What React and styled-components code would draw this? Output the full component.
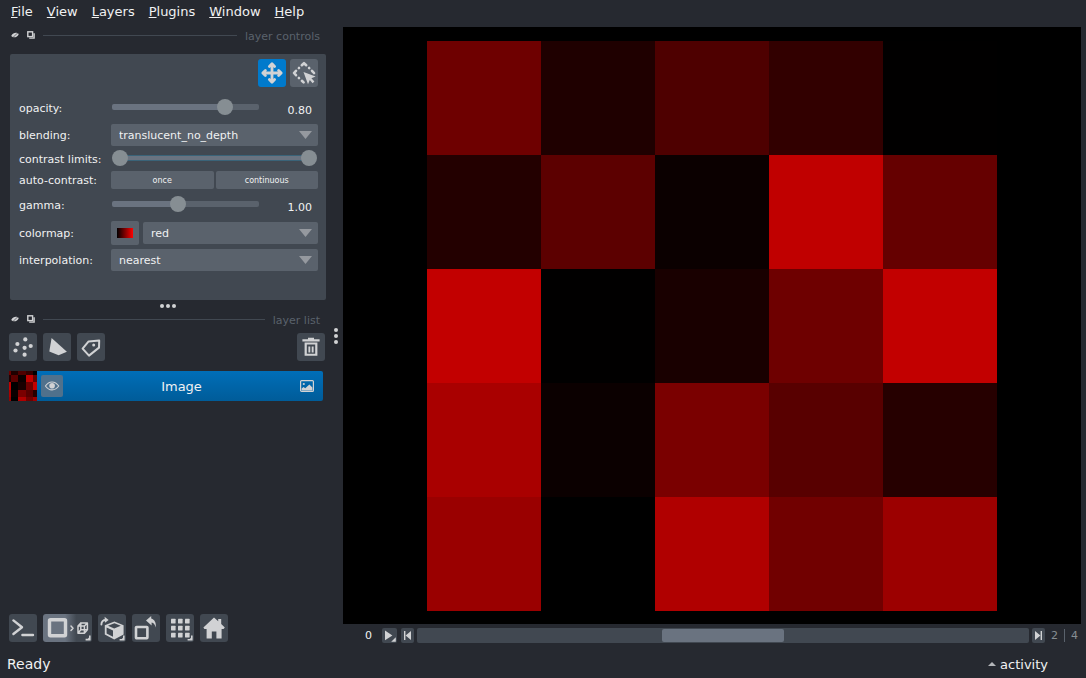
import { useState } from 'react';
import styled, { createGlobalStyle } from 'styled-components';

const GlobalStyle = createGlobalStyle`
  * {
    box-sizing: border-box;
  }

  body {
    margin: 0;
    background: #262930;
    color: #f0f1f2;
    font-family: 'DejaVu Sans', sans-serif;
    font-size: 11px;
  }

  button, input, select {
    font-family: inherit;
    color: inherit;
    margin: 0;
  }
`;

const Window = styled.div`
  display: flex;
  flex-direction: column;
  height: 100vh;
`;

const MenuBar = styled.nav`
  display: flex;
  align-items: center;
  gap: 14px;
  height: 24px;
  padding: 0 11px;
`;

const MenuItem = styled.button`
  border: none;
  background: none;
  padding: 0;
  font-size: 13px;
  line-height: 20px;

  &::first-letter {
    text-decoration: underline;
  }
`;

const Main = styled.div`
  display: flex;
  flex: 1;
  min-height: 0;
`;

const Sidebar = styled.aside`
  display: flex;
  flex-direction: column;
  flex: none;
  width: 326px;
  padding: 0 0 8px 9px;
`;

const DockTitle = styled.div`
  display: flex;
  align-items: center;
  gap: 8px;
  height: 23px;
  padding: 0 6px 0 2px;
  margin-bottom: ${props => props.$space};
`;

const DockButton = styled.button`
  display: flex;
  border: none;
  background: none;
  padding: 0 0 1px;
`;

const DockLine = styled.div`
  flex: 1;
  height: 1px;
  background: #414851;
`;

const DockName = styled.h2`
  margin: 0;
  padding-top: 2px;
  font-size: 11px;
  font-weight: 400;
  line-height: 13px;
  color: #5a626c;
`;

const Controls = styled.section`
  display: flex;
  flex-direction: column;
  gap: 3px;
  margin-left: 1px;
  padding: 5px 8px 28px 9px;
  border-radius: 2px;
  background: #414851;
`;

const ModeButtons = styled.div`
  display: flex;
  justify-content: flex-end;
  gap: 4px;
  margin-bottom: 5px;
`;

const ControlRow = styled.div`
  display: grid;
  grid-template-columns: 92px minmax(0, 1fr);
  align-items: center;
  height: ${props => props.$height || '24px'};
`;

const ControlLabel = styled.label`
  padding-top: 2px;
  line-height: 14px;
  white-space: nowrap;
`;

const ControlBody = styled.div`
  display: flex;
  align-items: center;
  gap: ${props => props.$gap || '0'};
`;

const IconButton = styled.button`
  display: flex;
  flex: none;
  width: ${props => (props.$wide ? '49px' : '28px')};
  height: 28px;
  border: none;
  border-radius: 3px;
  padding: 0;
  background: ${props => {
    if (props.$tone === 'active') return '#007acc';
    if (props.$tone === 'mode') return '#5a626c';
    if (props.$wide) return 'linear-gradient(to right, #6a7380 45%, #414851 68%)';
    return '#414851';
  }};
`;

const Slider = styled.input`
  appearance: none;
  flex: 1;
  min-width: 0;
  height: 16px;
  margin: 0 0 2px 1px;
  background: transparent;

  &::-webkit-slider-runnable-track {
    height: 6px;
    border-radius: 2px;
    background: linear-gradient(to right, #6a7380 ${props => props.$fill}%, #5a626c ${props => props.$fill}%);
  }

  &::-webkit-slider-thumb {
    appearance: none;
    width: 16px;
    height: 16px;
    margin-top: -5px;
    border-radius: 50%;
    background: #868e93;
  }
`;

const SliderValue = styled.output`
  width: 59px;
  padding: 6px 6px 0 0;
  text-align: right;
  line-height: 14px;
`;

const RangePair = styled.div`
  position: relative;
  flex: 1;
  height: 16px;
  margin: 0 1px 2px;

  &::before {
    content: '';
    position: absolute;
    inset: 5px 8px;
    border: 1px solid #3a6378;
    border-width: 1px 0;
    background: #6a7380;
  }
`;

const RangeHandle = styled.input`
  appearance: none;
  position: absolute;
  inset: 0;
  width: 100%;
  height: 16px;
  background: transparent;
  pointer-events: none;

  &::-webkit-slider-thumb {
    appearance: none;
    pointer-events: auto;
    width: 16px;
    height: 16px;
    border-radius: 50%;
    background: #868e93;
  }
`;

const SelectBox = styled.div`
  position: relative;
  flex: 1;

  svg {
    position: absolute;
    right: 6px;
    top: 7px;
    pointer-events: none;
  }
`;

const Select = styled.select`
  appearance: none;
  display: block;
  width: 100%;
  height: 22px;
  border: none;
  border-radius: 2px;
  padding: 0 24px 0 8px;
  background: #5a626c;
  font-size: 11px;
`;

const SmallButton = styled.button`
  flex: 1;
  height: 18px;
  border: none;
  border-radius: 2px;
  padding: 0;
  background: #5a626c;
  font-size: 8px;
`;

const Swatch = styled.div`
  width: 28px;
  height: 24px;
  padding: 7px 6px;
  border-radius: 2px;
  background: #5a626c;

  &::before {
    content: '';
    display: block;
    height: 10px;
    background: linear-gradient(to right, #000, #f00);
  }
`;

const Splitter = styled.div`
  display: flex;
  flex-direction: ${props => (props.$vertical ? 'column' : 'row')};
  align-items: ${props => (props.$vertical ? 'center' : 'flex-end')};
  justify-content: center;
  gap: 2px;
  ${props => (props.$vertical ? 'width: 17px; padding: 0 0 2px 2px;' : 'height: 8px;')}

  i {
    width: 4px;
    height: 4px;
    border-radius: 50%;
    background: #d1d2d4;
  }
`;

const ButtonRow = styled.div`
  display: flex;
  gap: 6px;
  margin-right: 1px;
`;

const Spacer = styled.div`
  flex: 1;
`;

const LayerRow = styled.div`
  display: flex;
  align-items: center;
  height: 30px;
  margin: 10px 3px auto 0;
  border-radius: 2px;
  background: linear-gradient(to bottom, #006eb8, #005c99);
`;

const PixelGrid = styled.div`
  display: grid;
  grid-template-columns: repeat(5, 1fr);
  grid-template-rows: repeat(5, 1fr);
  height: calc(100% - 27px);
  aspect-ratio: 1;
`;

const Pixel = styled.div`
  background: ${props => props.$color};
`;

const EyeButton = styled.button`
  display: flex;
  width: 22px;
  height: 22px;
  margin-left: 4px;
  border: none;
  border-radius: 2px;
  padding: 0;
  background: #50718c;
`;

const LayerName = styled.span`
  flex: 1;
  font-size: 13px;
  text-align: center;
`;

const LayerKind = styled.span`
  display: flex;
  margin-right: 9px;
`;

const Viewer = styled.main`
  display: flex;
  flex-direction: column;
  flex: 1;
  min-width: 0;
  padding: 3px 5px 7px 0;
`;

const Canvas = styled.div`
  display: flex;
  align-items: center;
  justify-content: center;
  flex: 1;
  min-height: 0;
  background: #000;
`;

const Dims = styled.div`
  display: flex;
  align-items: center;
  gap: 3px;
  height: 15px;
  margin-top: 4px;
`;

const AxisLabel = styled.label`
  width: 36px;
  padding-right: 7px;
  text-align: right;
`;

const DimButton = styled.button`
  display: flex;
  flex: none;
  width: ${props => (props.$wide ? '15px' : '13px')};
  height: 15px;
  margin-right: ${props => (props.$wide ? '1px' : '0')};
  border: none;
  border-radius: 2px;
  padding: 0;
  background: #414851;
`;

const DimSlider = styled.input`
  appearance: none;
  flex: 1;
  min-width: 0;
  height: 15px;
  border-radius: 2px;
  background: #414851;

  &::-webkit-slider-thumb {
    appearance: none;
    width: 122px;
    height: 13px;
    border-radius: 2px;
    background: #6a7380;
  }
`;

const Steps = styled.div`
  display: flex;
  align-items: center;
  gap: 6px;
  padding: 0 3px;
  color: #868e93;

  span + span {
    border-left: 1px solid #5a626c;
    padding-left: 6px;
  }
`;

const StatusBar = styled.footer`
  display: flex;
  align-items: center;
  justify-content: space-between;
  height: 28px;
  padding: 0 38px 0 7px;
  font-size: 14px;
`;

const ActivityButton = styled.button`
  display: flex;
  align-items: center;
  gap: 4px;
  border: none;
  background: none;
  padding: 0;
  font-size: 13px;
`;

const ICON = '#d1d2d4';

const Icon = ({ width = 28, height = 28, children }) => (
  <svg width={width} height={height} viewBox={`0 0 ${width} ${height}`} fill={ICON} stroke="none" aria-hidden="true">
    {children}
  </svg>
);

const Line = ({ d, w = 2, ...rest }) => (
  <path d={d} fill="none" stroke={ICON} strokeWidth={w} strokeLinejoin="round" strokeLinecap="round" {...rest} />
);

// small mark on buttons that open a right-click menu
const Corner = ({ x = 22, y = 22 }) => <path d={`M${x + 5} ${y}v5h-5v-1.6h2.2l1.2-1.2v-2.2z`} />;

const MoveIcon = () => (
  <Icon>
    <Line d="M14 6V22M6 14H22" w={2.8} />
    <Line d="M11.4 7.4L14 4.8L16.6 7.4M11.4 20.6L14 23.2L16.6 20.6M7.4 11.4L4.8 14L7.4 16.6M20.6 11.4L23.2 14L20.6 16.6" w={2.8} />
  </Icon>
);

const TransformIcon = () => (
  <Icon>
    <Line d="M11.8 6.2L14 4.2L16.2 6.2M6 11.8L4 14L6 16.2M22 11.8L24 14M11.9 21.8L13.6 23.4" w={2.6} />
    <Line d="M9 9L8.9 9.1M19.1 9L19.2 9.1M8.9 19L9 19.1" w={2.6} />
    <path d="M13.5 13L25.6 17.4L21.4 19.2L24.4 22.6L22.6 24.2L19.8 21L18 25.2Z" />
  </Icon>
);

const PointsIcon = () => (
  <Icon>
    {[[16.3, 6.4], [8.4, 11], [21.7, 13], [15.6, 14.8], [6.5, 17.5], [15.6, 21.7]].map(([x, y]) => (
      <circle key={`${x}-${y}`} cx={x} cy={y} r="2.1" />
    ))}
  </Icon>
);

const ShapesIcon = () => (
  <Icon>
    <path d="M8.6 5L23.9 18.8L15.6 22.2L6.3 18.6Z" />
  </Icon>
);

const LabelsIcon = () => (
  <Icon>
    <Line d="M5.6 15.6L11.6 8.4L22.2 7.6L22 14.6L12 22.6Z" />
    <circle cx="16.7" cy="12" r="1.5" />
  </Icon>
);

const TrashIcon = () => (
  <Icon>
    <path d="M5.4 6.2H11V4.8H17V6.2H22.6V8.4H5.4Z" />
    <path fillRule="evenodd" d="M7.6 9.4H20.4V22.8H7.6ZM9.8 11.6V20.8H18.2V11.6Z" />
    <path d="M11.4 13.4H13.3V19.4H11.4ZM14.7 13.4H16.6V19.4H14.7Z" />
  </Icon>
);

const ConsoleIcon = () => (
  <Icon>
    <Line d="M4.4 6.4L13 13.2L4.4 20M13.4 21H24" w={2.4} />
  </Icon>
);

const DisplayIcon = () => (
  <Icon width={49}>
    <rect x="6.5" y="5.8" width="16" height="16" rx="1" fill="none" stroke={ICON} strokeWidth="3.4" />
    <Line d="M28 12L30 14.2L28 16.4" w={1.5} />
    <Line d="M35 12H41.4V19.2H35ZM37.8 9H44.4V15.8L41.4 19.2M35 12L37.8 9M41.4 12L44.4 9M37.8 9V15.8H44.4M37.8 15.8L35 19.2" w={1.5} />
    <Corner x={42.6} y={21.4} />
  </Icon>
);

const RollIcon = () => (
  <Icon>
    <path fillRule="evenodd" d="M16.4 7.6L25.6 11.2V20.6L16.2 25.4L6.8 20.6V11.2ZM16.4 9.2L10 11.8L16.2 14.4L22.8 11.8ZM8.6 13.6V19.6L15 22.8V16.4Z" />
    <Line d="M3.4 10.6C3.4 7.4 5 6 8 6" w={1.9} />
    <path d="M6.6 2.8L10.6 6L7 8.8Z" />
    <Corner x={21.6} y={21.6} />
  </Icon>
);

const TransposeIcon = () => (
  <Icon>
    <rect x="4" y="13" width="11.4" height="11.2" rx="0.6" fill="none" stroke={ICON} strokeWidth="2.6" />
    <path d="M14 6.4L19.2 2V4.6C22.8 5.6 24.2 9 23.8 13.4C22.8 10.6 21.8 9.2 19.6 8.6V11.6Z" />
  </Icon>
);

const GridIcon = () => (
  <Icon>
    {[4.8, 11.8, 18.8].map(y => [5, 12, 19].map(x => (
      <rect key={`${x}-${y}`} x={x} y={y} width="4.6" height="4.6" rx="0.4" />
    )))}
    <Corner x={21.6} y={21.6} />
  </Icon>
);

const HomeIcon = () => (
  <Icon>
    <path d="M14 3.4L18.2 7.2V5H21.2V10L24.8 13.6L23.6 15H21.6V24.6H16.4V17.4H11.8V24.6H6.6V15H4.4L3.4 13.6Z" />
  </Icon>
);

const EyeIcon = () => (
  <Icon width={22} height={22}>
    <Line d="M4.4 11C8 5.6 14 5.6 17.8 11C14 16.2 8 16.2 4.4 11Z" w={1.1} />
    <circle cx="11.1" cy="10.8" r="2.8" />
  </Icon>
);

const ImageIcon = () => (
  <Icon width={14} height={12}>
    <rect x="0.6" y="0.6" width="12.8" height="10.8" rx="1" fill="none" stroke={ICON} strokeWidth="1.2" />
    <circle cx="3.8" cy="4" r="1.1" />
    <path d="M1.6 10.4V8.6L3.6 7L5.2 8.2L9.4 4.4L12.4 7.4V10.4Z" />
  </Icon>
);

const HideIcon = () => (
  <Icon width={8} height={8}>
    <path d="M0.2 5C1.4 2.2 4.4 1.4 6.2 2L7.8 3C6.8 5.8 4 6.8 2 6.2Z" />
    <path d="M1.4 7L7 1.6" stroke="#262930" strokeWidth="0.6" />
  </Icon>
);

const FloatIcon = () => (
  <Icon width={8} height={8}>
    <rect x="0.8" y="0.8" width="4.8" height="4.8" fill="none" stroke={ICON} strokeWidth="1.4" />
    <path d="M6.4 2.2H7.8V7.8H2.2V6.4H6.4Z" />
  </Icon>
);

const Arrow = () => (
  <svg width="13" height="8" viewBox="0 0 13 8" aria-hidden="true">
    <path d="M0 0H13L6.5 8Z" fill="#95999f" />
  </svg>
);

const PIXELS = [
  ['#6e0000', '#1f0000', '#4e0000', '#320000', '#010000'],
  ['#230000', '#5c0000', '#0b0000', '#c00000', '#650000'],
  ['#c20000', '#010000', '#190000', '#6e0000', '#c20000'],
  ['#a90000', '#0b0000', '#7a0000', '#580000', '#260000'],
  ['#9a0000', '#000000', '#b00000', '#710000', '#9c0000'],
];

const THUMB_ROWS = [0, 4, 11, 19, 26, 30];
const THUMB_COLS = [0, 2, 9, 17, 24, 28];

function Thumbnail() {
  return (
    <svg width="28" height="30" viewBox="0 0 28 30" shapeRendering="crispEdges" aria-hidden="true">
      {PIXELS.map((row, y) => row.map((color, x) => (
        <rect
          key={`${x}-${y}`}
          x={THUMB_COLS[x]}
          y={THUMB_ROWS[y]}
          width={THUMB_COLS[x + 1] - THUMB_COLS[x]}
          height={THUMB_ROWS[y + 1] - THUMB_ROWS[y]}
          fill={color}
        />
      )))}
    </svg>
  );
}

function Dock({ name, space }) {
  return (
    <DockTitle $space={space}>
      <DockButton aria-label={`Hide ${name}`}><HideIcon /></DockButton>
      <DockButton aria-label={`Float ${name}`}><FloatIcon /></DockButton>
      <DockLine />
      <DockName>{name}</DockName>
    </DockTitle>
  );
}

function SliderRow({ id, label, min, max, initial }) {
  const [value, setValue] = useState(initial);
  return (
    <ControlRow $height="26px">
      <ControlLabel htmlFor={id}>{label}</ControlLabel>
      <ControlBody>
        <Slider
          id={id}
          type="range"
          min={min}
          max={max}
          step="0.01"
          value={value}
          $fill={((value - min) / (max - min)) * 100}
          onChange={e => setValue(Number(e.target.value))}
        />
        <SliderValue htmlFor={id}>{value.toFixed(2)}</SliderValue>
      </ControlBody>
    </ControlRow>
  );
}

function Combo({ id, options }) {
  return (
    <SelectBox>
      <Select id={id}>
        {options.map(option => <option key={option}>{option}</option>)}
      </Select>
      <Arrow />
    </SelectBox>
  );
}

export default function App() {
  const menus = ['File', 'View', 'Layers', 'Plugins', 'Window', 'Help'];

  return (
    <Window>
      <GlobalStyle />
      <MenuBar>
        {menus.map(menu => <MenuItem key={menu}>{menu}</MenuItem>)}
      </MenuBar>

      <Main>
        <Sidebar>
          <Dock name="layer controls" space="7px" />
          <Controls>
            <ModeButtons>
              <IconButton $tone="active" aria-label="Pan/zoom"><MoveIcon /></IconButton>
              <IconButton $tone="mode" aria-label="Transform"><TransformIcon /></IconButton>
            </ModeButtons>
            <SliderRow id="opacity" label="opacity:" min={0} max={1} initial={0.8} />
            <ControlRow $height="22px">
              <ControlLabel htmlFor="blending">blending:</ControlLabel>
              <Combo id="blending" options={['translucent_no_depth', 'translucent', 'additive', 'opaque']} />
            </ControlRow>
            <ControlRow $height="19px">
              <ControlLabel htmlFor="limit-low">contrast limits:</ControlLabel>
              <RangePair>
                <RangeHandle id="limit-low" type="range" defaultValue="0" />
                <RangeHandle type="range" defaultValue="100" aria-label="upper contrast limit" />
              </RangePair>
            </ControlRow>
            <ControlRow $height="18px">
              <ControlLabel as="span">auto-contrast:</ControlLabel>
              <ControlBody $gap="2px">
                <SmallButton>once</SmallButton>
                <SmallButton>continuous</SmallButton>
              </ControlBody>
            </ControlRow>
            <SliderRow id="gamma" label="gamma:" min={0.2} max={2} initial={1} />
            <ControlRow>
              <ControlLabel htmlFor="colormap">colormap:</ControlLabel>
              <ControlBody $gap="4px">
                <Swatch />
                <Combo id="colormap" options={['red', 'green', 'blue', 'gray']} />
              </ControlBody>
            </ControlRow>
            <ControlRow>
              <ControlLabel htmlFor="interpolation">interpolation:</ControlLabel>
              <Combo id="interpolation" options={['nearest', 'linear', 'cubic']} />
            </ControlRow>
          </Controls>

          <Splitter><i /><i /><i /></Splitter>

          <Dock name="layer list" space="2px" />
          <ButtonRow>
            <IconButton aria-label="New points layer"><PointsIcon /></IconButton>
            <IconButton aria-label="New shapes layer"><ShapesIcon /></IconButton>
            <IconButton aria-label="New labels layer"><LabelsIcon /></IconButton>
            <Spacer />
            <IconButton aria-label="Delete layer"><TrashIcon /></IconButton>
          </ButtonRow>
          <LayerRow>
            <Thumbnail />
            <EyeButton aria-label="Toggle visibility"><EyeIcon /></EyeButton>
            <LayerName>Image</LayerName>
            <LayerKind><ImageIcon /></LayerKind>
          </LayerRow>

          <ButtonRow>
            <IconButton aria-label="Console"><ConsoleIcon /></IconButton>
            <IconButton $wide aria-label="Toggle 2D/3D"><DisplayIcon /></IconButton>
            <IconButton aria-label="Roll dimensions"><RollIcon /></IconButton>
            <IconButton aria-label="Transpose dimensions"><TransposeIcon /></IconButton>
            <IconButton aria-label="Grid mode"><GridIcon /></IconButton>
            <IconButton aria-label="Reset view"><HomeIcon /></IconButton>
          </ButtonRow>
        </Sidebar>

        <Splitter $vertical><i /><i /><i /></Splitter>

        <Viewer>
          <Canvas>
            <PixelGrid>
              {PIXELS.flat().map((color, index) => <Pixel key={index} $color={color} />)}
            </PixelGrid>
          </Canvas>
          <Dims>
            <AxisLabel htmlFor="axis-0">0</AxisLabel>
            <DimButton $wide aria-label="Play">
              <Icon width={15} height={15}>
                <path d="M3 2.6L10.4 7.4L3 12.2Z" />
                <path d="M13.8 9.2V13.8H9.2Z" />
              </Icon>
            </DimButton>
            <DimButton aria-label="Previous">
              <Icon width={13} height={15}>
                <path d="M3 3H4.4V12H3ZM10 3V12L4.6 7.5Z" />
              </Icon>
            </DimButton>
            <DimSlider id="axis-0" type="range" min="0" max="4" defaultValue="2" />
            <DimButton aria-label="Next">
              <Icon width={13} height={15}>
                <path d="M8.6 3H10V12H8.6ZM3 3V12L8.4 7.5Z" />
              </Icon>
            </DimButton>
            <Steps><span>2</span><span>4</span></Steps>
          </Dims>
        </Viewer>
      </Main>

      <StatusBar>
        <span>Ready</span>
        <ActivityButton>
          <svg width="8" height="4" viewBox="0 0 8 4" aria-hidden="true">
            <path d="M0 4L4 0L8 4Z" fill="#b4b6b9" />
          </svg>
          activity
        </ActivityButton>
      </StatusBar>
    </Window>
  );
}
